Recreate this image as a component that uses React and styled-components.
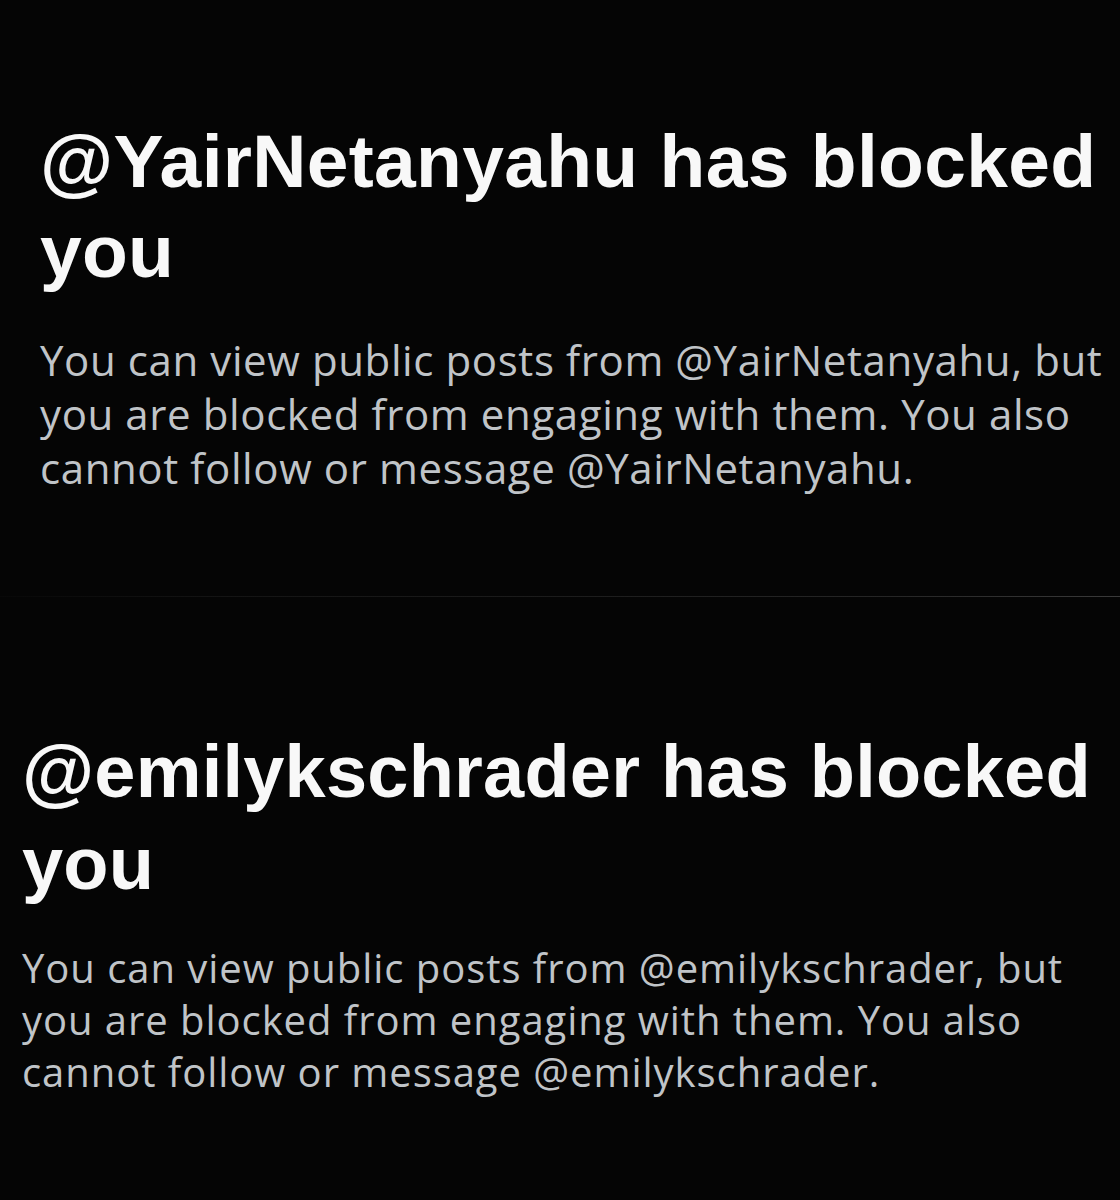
import styled, { createGlobalStyle } from "styled-components";

const GlobalStyle = createGlobalStyle`
  html, body {
    margin: 0;
    padding: 0;
    background: #050505;
  }
  body {
    width: 1120px;
    height: 1200px;
    overflow: hidden;
  }
`;

// each screenshot was cropped at a slightly different zoom, so sizes vary per panel
const panels = [
  {
    handle: "YairNetanyahu",
    height: 596,
    padTop: 116,
    inset: 40,
    title: { size: 75, line: 90, spacing: 0.3 },
    body: { size: 42, line: 54, spacing: 0.6, gap: 37 },
  },
  {
    handle: "emilykschrader",
    height: 603,
    padTop: 129,
    inset: 22,
    title: { size: 74, line: 92, spacing: 0.2 },
    body: { size: 40, line: 52, spacing: 0.95, gap: 32 },
  },
];

function blockedLines(handle) {
  return [
    `You can view public posts from @${handle}, but`,
    "you are blocked from engaging with them. You also",
    `cannot follow or message @${handle}.`,
  ];
}

function App() {
  return (
    <Page>
      <GlobalStyle />
      {panels.map((p, i) => (
        <div key={p.handle}>
          {i > 0 && <Divider />}
          <Panel $height={p.height} $padTop={p.padTop} $inset={p.inset}>
            <Title
              $size={p.title.size}
              $line={p.title.line}
              $spacing={p.title.spacing}
            >
              <Line>@{p.handle} has blocked</Line>
              <Line>you</Line>
            </Title>
            <Body
              $size={p.body.size}
              $line={p.body.line}
              $spacing={p.body.spacing}
              $gap={p.body.gap}
            >
              {blockedLines(p.handle).map((text) => (
                <Line key={text}>{text}</Line>
              ))}
            </Body>
          </Panel>
        </div>
      ))}
    </Page>
  );
}

export default App;

const Page = styled.div`
  display: flex;
  flex-direction: column;
  width: 1120px;
  height: 1200px;
  background: #050505;
  overflow: hidden;
`;

const Divider = styled.div`
  height: 1px;
  background: linear-gradient(
    90deg,
    #080808 0%,
    #141414 20%,
    #1c1c1c 50%,
    #262626 80%,
    #3a3a3a 100%
  );
`;

const Panel = styled.section`
  box-sizing: border-box;
  height: ${(p) => p.$height}px;
  padding: ${(p) => p.$padTop}px 0 0 ${(p) => p.$inset}px;
  display: flex;
  flex-direction: column;
`;

const Line = styled.span`
  display: block;
  white-space: nowrap;
`;

const Title = styled.h1`
  margin: 0;
  font-family: "Liberation Sans", Arial, sans-serif;
  font-weight: 700;
  font-size: ${(p) => p.$size}px;
  line-height: ${(p) => p.$line}px;
  letter-spacing: ${(p) => p.$spacing}px;
  color: #f8f8f8;
`;

const Body = styled.p`
  margin: ${(p) => p.$gap}px 0 0;
  font-family: "Open Sans", sans-serif;
  font-weight: 400;
  font-size: ${(p) => p.$size}px;
  line-height: ${(p) => p.$line}px;
  letter-spacing: ${(p) => p.$spacing}px;
  color: #c0c4c8;
`;
